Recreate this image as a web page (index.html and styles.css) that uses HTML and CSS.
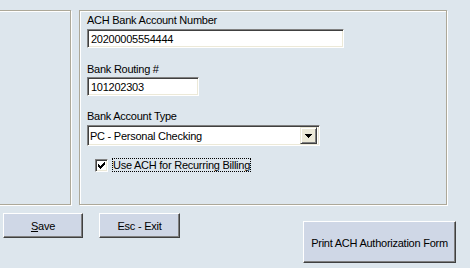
FILE: index.html
```html
<!DOCTYPE html>
<html>
<head>
<meta charset="utf-8">
<link rel="stylesheet" href="styles.css">
</head>
<body>
<div class="top">
  <div class="panel panel-left"></div>
  <div class="panel panel-right">
    <div class="label label-first">ACH Bank Account Number</div>
    <div class="field field-account">20200005554444</div>
    <div class="label label-routing">Bank Routing #</div>
    <div class="field field-routing">101202303</div>
    <div class="label label-type">Bank Account Type</div>
    <div class="combo">
      <span class="combo-text">PC - Personal Checking</span>
      <span class="combo-btn">
        <svg width="7" height="4" viewBox="0 0 7 4" shape-rendering="crispEdges"><rect x="0" y="0" width="7" height="1" fill="#000"/><rect x="1" y="1" width="5" height="1" fill="#000"/><rect x="2" y="2" width="3" height="1" fill="#000"/><rect x="3" y="3" width="1" height="1" fill="#000"/></svg>
      </span>
    </div>
    <div class="check-row">
      <span class="checkbox">
        <svg width="7" height="7" viewBox="0 0 7 7" shape-rendering="crispEdges"><rect x="0" y="2" width="1" height="3"/><rect x="1" y="3" width="1" height="3"/><rect x="2" y="4" width="1" height="3"/><rect x="3" y="3" width="1" height="3"/><rect x="4" y="2" width="1" height="3"/><rect x="5" y="1" width="1" height="3"/><rect x="6" y="0" width="1" height="3"/></svg>
      </span>
      <span class="check-label">Use ACH for Recurring Billing</span>
    </div>
  </div>
</div>
<div class="buttons">
  <div class="btn btn-save"><span class="btn-text"><u>S</u>ave</span></div>
  <div class="btn btn-exit"><span class="btn-text">Esc - Exit</span></div>
  <div class="btn btn-print"><span class="btn-text">Print ACH Authorization Form</span></div>
</div>
</body>
</html>
```
FILE: styles.css
```css
* { box-sizing: border-box; }
html, body {
  margin: 0;
  padding: 0;
  background: #dde6ed;
  font-family: "Liberation Sans", Arial, sans-serif;
  font-size: 11px;
  line-height: 13px;
  letter-spacing: -0.25px;
  color: #000;
  overflow: hidden;
}
body { padding-top: 10px; }

.top {
  display: flex;
  gap: 8px;
  height: 195px;
}
.panel {
  border: 1px solid #aca899;
  box-shadow: inset 1px 1px 0 #fff, 1px 1px 0 #fff;
  height: 195px;
}
.panel-left {
  margin-left: -10px;
  width: 81px;
}
.panel-right {
  width: 368px;
  padding: 3px 0 0 7px;
  display: flex;
  flex-direction: column;
  align-items: flex-start;
}

.label { height: 13px; white-space: nowrap; }
.label-routing { margin-top: 15px; }
.label-type { margin-top: 14px; }

.field {
  height: 19px;
  background: #fff;
  border: 1px solid;
  border-color: #808080 #fff #fff #808080;
  box-shadow: inset 1px 1px 0 #404040, inset -1px -1px 0 #ece9d8;
  padding: 2px 3px 0 3px;
  line-height: 14px;
  white-space: nowrap;
}
.field-account { width: 257px; margin-top: 2px; }
.field-routing { width: 112px; margin-top: 1px; }

.combo {
  margin-top: 2px;
  width: 233px;
  height: 21px;
  background: #fff;
  border: 1px solid;
  border-color: #808080 #fff #fff #808080;
  box-shadow: inset 1px 1px 0 #404040, inset -1px -1px 0 #ece9d8;
  padding: 2px;
  display: flex;
  align-items: center;
  justify-content: space-between;
}
.combo-text { padding: 1px 0 0 0; white-space: nowrap; }
.combo-btn {
  width: 17px;
  height: 17px;
  background: #ece9d8;
  border: 1px solid;
  border-color: #ece9d8 #404040 #404040 #ece9d8;
  box-shadow: inset 1px 1px 0 #fff, inset -1px -1px 0 #808080;
  display: flex;
  align-items: center;
  justify-content: center;
  padding-top: 1px;
}
.combo-btn svg { display: block; }

.check-row {
  margin-top: 12px;
  margin-left: 8px;
  display: flex;
  align-items: center;
  height: 14px;
}
.checkbox {
  width: 13px;
  height: 13px;
  background: #fff;
  border: 1px solid;
  border-color: #808080 #fff #fff #808080;
  box-shadow: inset 1px 1px 0 #404040, inset -1px -1px 0 #ece9d8;
  display: flex;
  align-items: center;
  justify-content: center;
}
.checkbox svg { display: block; }
.check-label {
  margin-left: 4px;
  height: 14px;
  padding: 0 1px 0 1px;
  outline: 1px dotted #000;
  outline-offset: -1px;
  line-height: 14px;
  white-space: nowrap;
}

.buttons {
  display: flex;
  align-items: flex-start;
  margin-top: 8px;
  padding-left: 3px;
}
.btn {
  background: #cfd7e6;
  border: 1px solid;
  border-color: #fff #404040 #404040 #fff;
  box-shadow: inset -1px -1px 0 #808080;
  display: flex;
  align-items: center;
  justify-content: center;
  white-space: nowrap;
}
.btn-text { padding-top: 2px; }
.btn-save { width: 80px; height: 25px; }
.btn-exit { width: 81px; height: 25px; margin-left: 16px; }
.btn-print { width: 153px; height: 42px; margin-left: 123px; margin-top: 8px; }
```
